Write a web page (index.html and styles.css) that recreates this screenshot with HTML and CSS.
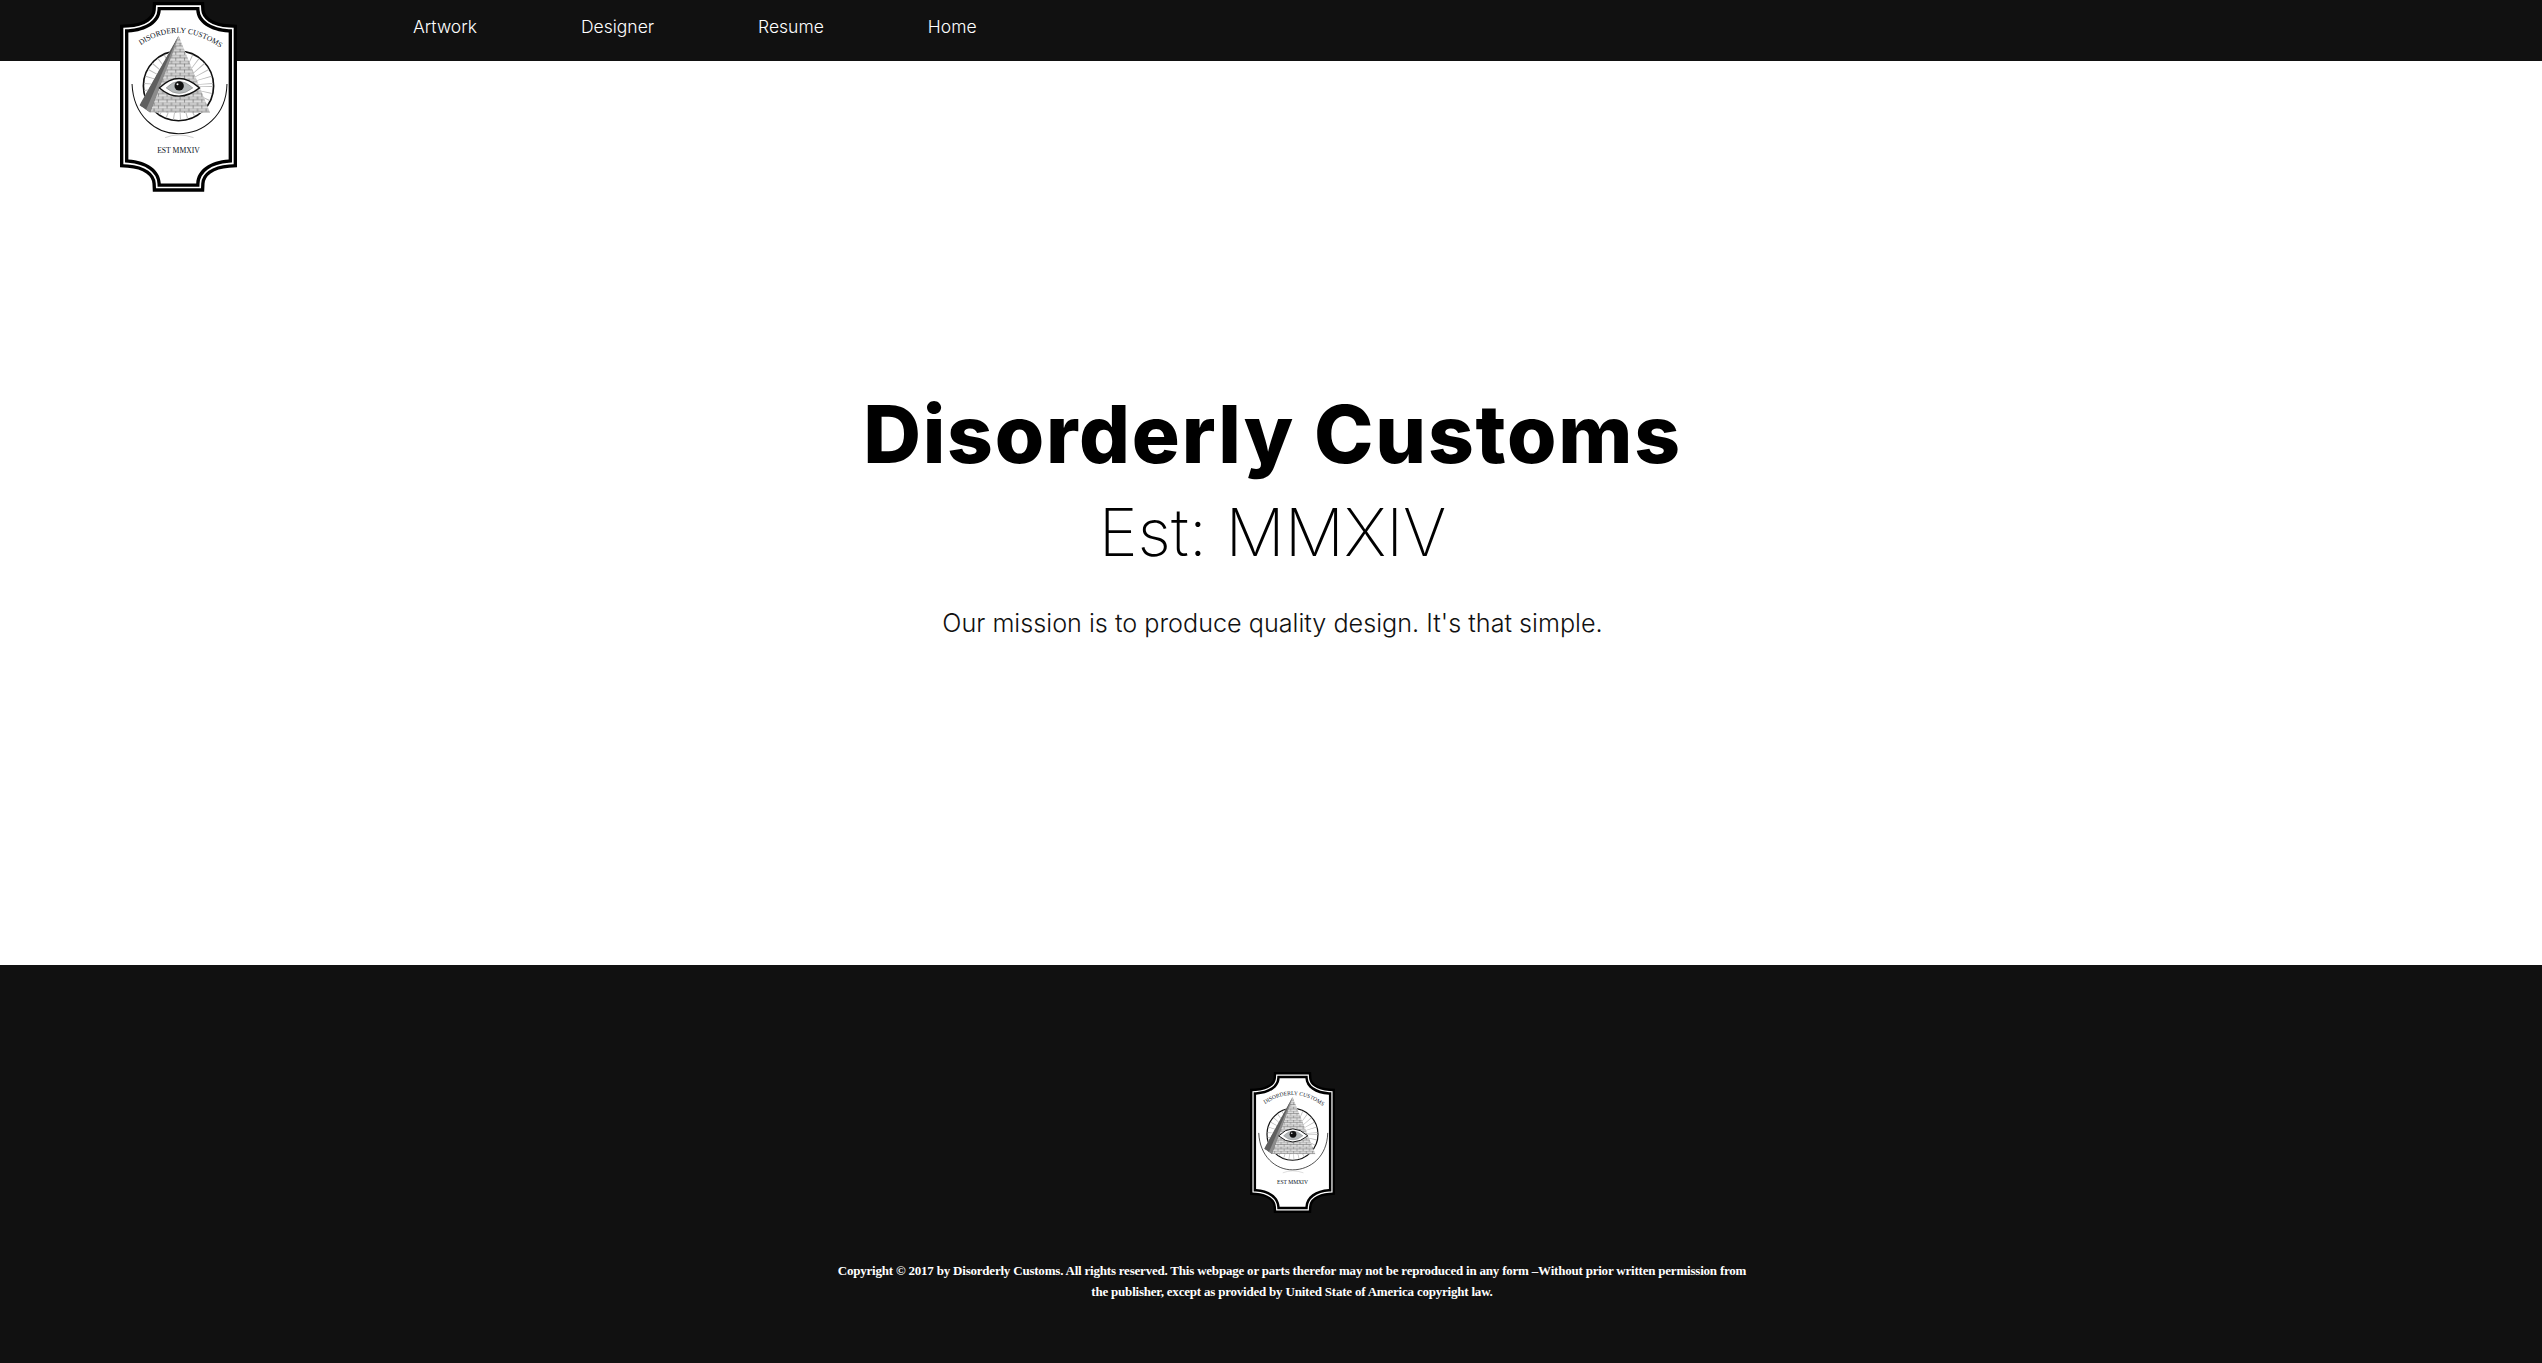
FILE: index.html
```html
<!DOCTYPE html>
<html lang="en">
<head>
<meta charset="utf-8">
<title>Disorderly Customs</title>
<link rel="stylesheet" href="styles.css">
</head>
<body>
<svg class="defs" width="0" height="0" aria-hidden="true">
  <defs>
    <path id="plaque" d="M182 28H288C290 66 330 92 385 95V478C330 482 290 508 288 550H182C180 508 140 482 85 478V95C140 92 180 66 182 28Z"/>
    <path id="arc" d="M90 158Q235 30 392 166"/>
    <clipPath id="pyr"><path d="M235 104L330 338L150 336L118 314Z"/></clipPath>
    <pattern id="bricks" width="26" height="18" patternUnits="userSpaceOnUse">
      <path d="M0 0H26M0 9H26M6 0V9M19 9V18" fill="none" stroke="#444" stroke-width="1.5"/>
    </pattern>
    <symbol id="logo" viewBox="60 3 350 576" preserveAspectRatio="none">
      <use href="#plaque" class="r1"/>
      <use href="#plaque" class="r2"/>
      <use href="#plaque" class="r3"/>
      <use href="#plaque" class="r4"/>
      <circle cx="235" cy="256" r="105" class="wheel"/>
      <circle cx="235" cy="256" r="66" class="rays"/>
      <path d="M96 250C100 345 165 400 235 400C310 400 378 345 380 250" class="thin"/>
      <path d="M195 412Q235 396 280 412" class="faint"/>
      <g clip-path="url(#pyr)">
        <rect x="110" y="100" width="230" height="245" fill="#dcdcdc"/>
        <rect x="110" y="100" width="230" height="245" fill="url(#bricks)"/>
        <path d="M235 104L118 314L150 336L218 150Z" fill="#5f5f5f"/>
        <path d="M235 104L138 328L150 336L224 140Z" fill="#8c8c8c"/>
      </g>
      <path d="M178 262Q235 205 298 262Q235 312 178 262Z" class="eye"/>
      <path d="M198 262Q236 222 278 262Q236 296 198 262Z" class="iris"/>
      <circle cx="237" cy="256" r="14" fill="#111"/>
      <circle cx="232" cy="251" r="3" fill="#fff"/>
      <text class="arc-text"><textPath href="#arc" startOffset="50%">DISORDERLY CUSTOMS</textPath></text>
      <text x="235" y="458" class="est-text">EST MMXIV</text>
    </symbol>
  </defs>
</svg>

<header class="topbar">
  <a class="brand" href="#"><svg class="logo-lg" role="img" aria-label="Disorderly Customs logo"><use href="#logo"/></svg></a>
  <nav class="nav">
    <a href="#">Artwork</a>
    <a href="#">Designer</a>
    <a href="#">Resume</a>
    <a href="#">Home</a>
  </nav>
</header>

<main class="hero">
  <h1>Disorderly Customs</h1>
  <h2>Est: MMXIV</h2>
  <p>Our mission is to produce quality design. It's that simple.</p>
</main>

<footer class="footer">
  <svg class="logo-sm" role="img" aria-label="Disorderly Customs logo"><use href="#logo"/></svg>
  <p>Copyright © 2017 by Disorderly Customs. All rights reserved. This webpage or parts therefor may not be reproduced in any form –Without prior written permission from the publisher, except as provided by United State of America copyright law.</p>
</footer>
</body>
</html>
```
FILE: styles.css
```css
* { box-sizing: border-box; }
html, body { height: 100%; }
body {
  margin: 0;
  min-height: 100vh;
  display: flex;
  flex-direction: column;
  background: #fff;
  color: #000;
  font-family: Inter, "Liberation Sans", sans-serif;
  overflow: hidden;
}
.defs { position: absolute; }

.topbar {
  position: relative;
  height: 61px;
  flex: none;
  background: #111;
  padding-left: 413px;
  display: flex;
  align-items: center;
}
.brand { position: absolute; left: 120px; top: 2px; display: block; line-height: 0; }
.logo-lg { width: 117px; height: 191px; display: block; }
.nav { display: flex; gap: 104px; margin-top: -7px; }
.nav a {
  color: #fff;
  text-decoration: none;
  font-size: 17.5px;
  font-weight: 350;
  line-height: 20px;
}

.hero {
  height: 904px;
  flex: none;
  padding: 328px 0 0 3px;
  text-align: center;
}
.hero h1 {
  margin: 0;
  font-size: 80px;
  line-height: 90px;
  font-weight: 800;
  letter-spacing: 1.75px;
}
.hero h2 {
  margin: 13px 0 0;
  font-size: 66px;
  line-height: 80px;
  font-weight: 200;
}
.hero p {
  margin: 35px 0 0;
  font-size: 25.2px;
  line-height: 32px;
  font-weight: 300;
  color: #111;
}

.footer {
  flex: 1;
  background: #111;
  color: #fff;
  padding: 107px 0 0 42px;
  display: flex;
  flex-direction: column;
  align-items: center;
}
.logo-sm { width: 85px; height: 142px; display: block; }
.footer p {
  margin: 46px 0 0;
  width: 925px;
  text-align: center;
  font-family: "Liberation Serif", serif;
  font-size: 13px;
  font-weight: 700;
  letter-spacing: -0.21px;
  line-height: 21px;
}

.r1 { fill: #000; stroke: #000; stroke-width: 50px; }
.r2 { fill: #fff; stroke: #fff; stroke-width: 30px; }
.r3 { fill: #000; stroke: #000; stroke-width: 20px; }
.r4 { fill: #fff; stroke: none; }
.wheel { fill: #fff; stroke: #111; stroke-width: 5px; }
.rays { fill: none; stroke: #bbb; stroke-width: 74px; stroke-dasharray: 2 12; }
.thin { fill: none; stroke: #111; stroke-width: 3px; }
.faint { fill: none; stroke: #bbb; stroke-width: 2px; }
.eye { fill: #fff; stroke: #111; stroke-width: 4px; }
.iris { fill: #b5b9ba; stroke: #555; stroke-width: 1px; }
.arc-text {
  font-family: "Liberation Serif", serif;
  font-size: 23px;
  fill: #0c1424;
  text-anchor: middle;
}
.est-text {
  font-family: "Liberation Serif", serif;
  font-size: 23px;
  fill: #0c1424;
  text-anchor: middle;
}
```
